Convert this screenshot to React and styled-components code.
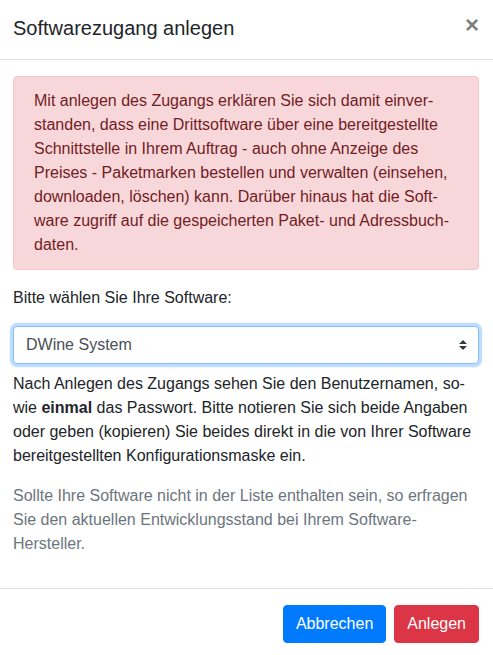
import React from "react";
import styled, { createGlobalStyle } from "styled-components";

const Global = createGlobalStyle`
  html, body { margin: 0; padding: 0; background: #fff; overflow: hidden; }
  body {
    font-family: "Liberation Sans", Arial, sans-serif;
    font-size: 16px;
    line-height: 1.5;
    color: #212529;
  }
  * { box-sizing: border-box; }
`;

const ModalContent = styled.div`
  width: 500px;
  margin: -4px 0 0 -4px;
  background: #fff;
  border: 1px solid rgba(0, 0, 0, 0.2);
  border-radius: 4.8px;
  display: flex;
  flex-direction: column;
`;

const Header = styled.div`
  display: flex;
  align-items: flex-start;
  justify-content: space-between;
  padding: 16px;
  border-bottom: 1px solid #dee2e6;
`;

const Title = styled.h5`
  margin: 0;
  font-size: 20px;
  font-weight: 500;
  line-height: 1.5;
`;

const Close = styled.button`
  padding: 16px;
  margin: -16px -16px -16px auto;
  background: transparent;
  border: 0;
  font-family: inherit;
  font-size: 24px;
  font-weight: 700;
  line-height: 1;
  color: #000;
  opacity: 0.5;
  text-shadow: 0 1px 0 #fff;
  cursor: pointer;
`;

const Body = styled.div`
  padding: 16px;
`;

const Alert = styled.div`
  padding: 12px 20px;
  margin-bottom: 16px;
  border: 1px solid #f5c6cb;
  border-radius: 4px;
  background: #f8d7da;
  color: #721c24;
`;

const Text = styled.p`
  margin: 0 0 16px;
  color: ${(p) => (p.$muted ? "#6c757d" : "#212529")};
`;

const SelectWrap = styled.div`
  position: relative;
  margin-bottom: 8px;
`;

const Select = styled.select`
  display: block;
  width: 100%;
  height: 38px;
  padding: 6px 28px 6px 12px;
  font-family: inherit;
  font-size: 16px;
  line-height: 1.5;
  color: #495057;
  background: #fff;
  border: 1px solid #80bdff;
  border-radius: 4px;
  appearance: none;
  -webkit-appearance: none;
  outline: 0;
  box-shadow: 0 0 0 3.2px rgba(0, 123, 255, 0.25);
`;

const Arrow = styled.svg`
  position: absolute;
  right: 12px;
  top: 14px;
  width: 8px;
  height: 10px;
  pointer-events: none;
`;

const Footer = styled.div`
  display: flex;
  align-items: center;
  justify-content: flex-end;
  border-top: 1px solid #dee2e6;
  padding: 12px;
`;

const Button = styled.button`
  margin: 4px;
  padding: 6px 12px;
  font-family: inherit;
  font-size: 16px;
  line-height: 1.5;
  font-weight: 400;
  color: #fff;
  background: ${(p) => (p.$variant === "danger" ? "#dc3545" : "#007bff")};
  border: 1px solid ${(p) => (p.$variant === "danger" ? "#dc3545" : "#007bff")};
  border-radius: 4px;
  cursor: pointer;
`;

export default function App() {
  return (
    <>
      <Global />
      <ModalContent lang="de">
        <Header>
          <Title>Softwarezugang anlegen</Title>
          <Close aria-label="Close">×</Close>
        </Header>
        <Body>
          <Alert>
            Mit anlegen des Zugangs erklären Sie sich damit einver{"\u00AD"}standen,
            dass eine Drittsoftware über eine bereitgestellte Schnittstelle in Ihrem
            Auftrag - auch ohne Anzeige des Preises - Paketmarken bestellen und
            verwalten (einsehen, downloaden, löschen) kann. Darüber hinaus hat die
            Soft{"\u00AD"}ware zugriff auf die gespeicherten Paket- und Adressbuch{"\u00AD"}daten.
          </Alert>
          <Text>Bitte wählen Sie Ihre Software:</Text>
          <SelectWrap>
            <Select defaultValue="dwine">
              <option value="dwine">DWine System</option>
            </Select>
            <Arrow viewBox="0 0 4 5">
              <path fill="#343a40" d="M2 0L0 2h4zm0 5L0 3h4z" />
            </Arrow>
          </SelectWrap>
          <Text>
            Nach Anlegen des Zugangs sehen Sie den Benutzernamen, so{"\u00AD"}wie{" "}
            <b>einmal</b> das Passwort. Bitte notieren Sie sich beide Angaben oder
            geben (kopieren) Sie beides direkt in die von Ihrer Software
            bereitgestellten Konfigurationsmaske ein.
          </Text>
          <Text $muted>
            Sollte Ihre Software nicht in der Liste enthalten sein, so erfragen Sie
            den aktuellen Entwicklungsstand bei Ihrem Software-Hersteller.
          </Text>
        </Body>
        <Footer>
          <Button>Abbrechen</Button>
          <Button $variant="danger">Anlegen</Button>
        </Footer>
      </ModalContent>
    </>
  );
}
